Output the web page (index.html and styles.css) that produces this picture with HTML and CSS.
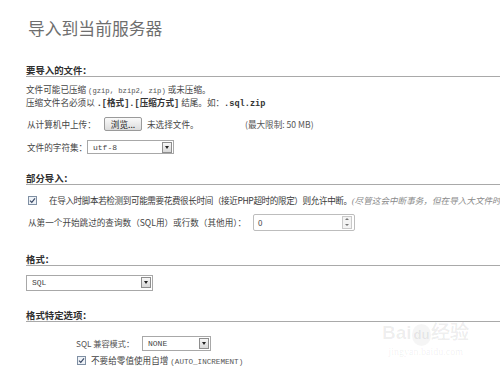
FILE: index.html
```html
<!DOCTYPE html>
<html lang="zh-CN">
<head>
<meta charset="utf-8">
<title>导入到当前服务器</title>
<link rel="stylesheet" href="styles.css">
</head>
<body>
<div class="page">
  <h1 class="title">导入到当前服务器</h1>

  <div class="sec-head h1st">要导入的文件：</div>
  <p class="desc">文件可能已压缩 <span class="latin">(gzip, bzip2, zip)</span> 或未压缩。<br>压缩文件名必须以 <b class="mono">.[格式].[压缩方式]</b> 结尾。如：<b class="mono">.sql.zip</b></p>
  <div class="row upload">
    <span class="lbl-upload">从计算机中上传：</span>
    <span class="btn">浏览...</span>
    <span class="nofile">未选择文件。</span>
    <span class="limit">(最大限制: 50 MB)</span>
  </div>
  <div class="row charset">
    <span class="lbl-charset">文件的字符集：</span>
    <span class="select sel-charset"><span class="val">utf-8</span><span class="arrow"></span></span>
  </div>

  <div class="sec-head h2nd">部分导入：</div>
  <div class="row check-row">
    <span class="cb"><svg width="9" height="9" viewBox="0 0 9 9"><rect x="0.5" y="0.5" width="8" height="8" fill="#eef2f7" stroke="#7f8fa3"/><path d="M2 4.6 L3.8 6.4 L7 2.4" fill="none" stroke="#3b4a66" stroke-width="1.2"/></svg></span>
    <span class="cb-text"><span class="tight">在导入时脚本若检测到可能需要花费很长时间（接近PHP超时的限定）则允许中断。</span><i class="note">(尽管这会中断事务，但在导入大文件时是个很好的方法。)</i></span>
  </div>
  <div class="row skip">
    <span class="lbl-skip">从第一个开始跳过的查询数（SQL用）或行数（其他用）：</span>
    <span class="num"><span class="val">0</span><span class="spin"><span class="up"></span><span class="down"></span></span></span>
  </div>

  <div class="sec-head h3rd">格式：</div>
  <div class="row fmt">
    <span class="select sel-format"><span class="val">SQL</span><span class="arrow"></span></span>
  </div>

  <div class="sec-head h4th">格式特定选项：</div>
  <div class="row compat">
    <span class="lbl-compat">SQL 兼容模式：</span>
    <span class="select sel-compat"><span class="val">NONE</span><span class="arrow"></span></span>
  </div>
  <div class="row check-row2">
    <span class="cb"><svg width="9" height="9" viewBox="0 0 9 9"><rect x="0.5" y="0.5" width="8" height="8" fill="#eef2f7" stroke="#7f8fa3"/><path d="M2 4.6 L3.8 6.4 L7 2.4" fill="none" stroke="#3b4a66" stroke-width="1.2"/></svg></span>
    <span class="cb-text2">不要给零值使用自增 <span class="small-mono">(AUTO_INCREMENT)</span></span>
  </div>
</div>
<div class="watermark">
  <div class="wm-logo">Bai<span class="wm-du">du</span>经验</div>
  <div class="wm-url">jingyan.baidu.com</div>
</div>
</body>
</html>
```
FILE: styles.css
```css
html, body {
  margin: 0;
  padding: 0;
  background: #fff;
}
body {
  width: 500px;
  height: 375px;
  overflow: hidden;
  position: relative;
  font-family: "Noto Sans CJK SC", "Liberation Sans", sans-serif;
  font-size: 8.6px;
  color: #454545;
  white-space: nowrap;
}
.page {
  padding-left: 26px;
}
.title {
  margin: 18px 0 0 2px;
  font-size: 16.8px;
  line-height: 20px;
  font-weight: normal;
  color: #6e6e6e;
}
.sec-head {
  font-size: 9.4px;
  font-weight: bold;
  color: #2f2f2f;
  line-height: 11px;
  height: 11px;
  border-bottom: 1px solid #a9a9a9;
}
.h1st { margin-top: 27px; }
.h2nd { margin-top: 19px; }
.h3rd { margin-top: 23px; }
.h4th { margin-top: 19px; }

.desc {
  margin: 7px 0 0 0;
  line-height: 11px;
}
.latin {
  font-family: "Liberation Mono", monospace;
  font-size: 7.2px;
  color: #555;
}
.mono {
  font-family: "Liberation Mono", "Noto Sans CJK SC", monospace;
  font-weight: bold;
  color: #333;
}
.row {
  display: flex;
  align-items: center;
}
.upload { margin-top: 7px; height: 14px; }
.lbl-upload { width: 77px; padding-left: 1px; }
.btn {
  box-sizing: border-box;
  width: 38px;
  height: 14px;
  border: 1px solid #9a9a9a;
  border-radius: 2px;
  background: linear-gradient(#fafafa, #dcdcdc);
  color: #222;
  font-size: 8.6px;
  line-height: 12px;
  text-align: center;
}
.nofile { width: 98px; margin-left: 5px; }
.limit { color: #555; }

.charset { margin-top: 9px; height: 14px; }
.lbl-charset { width: 60px; padding-left: 1px; }

.select {
  box-sizing: border-box;
  display: flex;
  align-items: center;
  justify-content: space-between;
  border: 1px solid #a8a8a8;
  background: #fff;
  padding: 0 1px 0 5px;
  font-family: "Liberation Mono", "DejaVu Sans Mono", monospace;
  font-size: 8px;
  color: #444;
}
.arrow {
  box-sizing: border-box;
  width: 10px;
  height: 11px;
  border: 1px solid #8e8e8e;
  background: linear-gradient(#f7f7f7, #d8d8d8);
  position: relative;
}
.arrow::after {
  content: "";
  position: absolute;
  left: 2px;
  top: 3px;
  border-left: 2px solid transparent;
  border-right: 2px solid transparent;
  border-top: 3px solid #222;
}
.sel-charset { width: 87px; height: 14px; }
.sel-format { width: 127px; height: 16px; }
.sel-compat { width: 69px; height: 15px; }

.check-row { margin-top: 9.5px; height: 11px; padding-left: 2px; }
.cb { display: flex; width: 9px; height: 9px; }
.cb-text { margin-left: 12px; color: #3a3a3a; }
.tight { letter-spacing: -0.4px; }
.note {
  color: #8a8a8a;
  font-family: "Liberation Serif", "Noto Sans CJK SC", serif;
  font-style: italic;
}
.skip { margin-top: 8px; height: 17px; }
.lbl-skip { width: 225px; padding-left: 2px; }
.num {
  box-sizing: border-box;
  width: 102px;
  height: 17px;
  border: 1px solid #bdbdbd;
  border-radius: 2px;
  display: flex;
  align-items: center;
  justify-content: space-between;
  padding: 0 2px 0 4px;
  font-size: 8px;
  color: #444;
}
.spin {
  box-sizing: border-box;
  width: 10px;
  height: 13px;
  border: 1px solid #c9c9c9;
  background: #f3f3f3;
  display: flex;
  flex-direction: column;
  align-items: center;
  justify-content: space-around;
}
.up {
  border-left: 2px solid transparent;
  border-right: 2px solid transparent;
  border-bottom: 2px solid #777;
}
.down {
  border-left: 2px solid transparent;
  border-right: 2px solid transparent;
  border-top: 2px solid #777;
}

.fmt { margin-top: 9px; }

.compat { margin-top: 14px; padding-left: 50px; }
.lbl-compat { width: 66px; font-size: 8.2px; color: #555; }
.check-row2 { margin-top: 4px; height: 11px; padding-left: 51px; }
.cb-text2 { margin-left: 5px; color: #444; }
.small-mono {
  font-family: "Liberation Mono", monospace;
  font-size: 7.6px;
  color: #555;
}

.watermark {
  position: absolute;
  left: 382px;
  top: 322px;
  color: rgba(0, 0, 0, 0.07);
  text-align: center;
}
.wm-logo {
  font-family: "Liberation Sans", sans-serif;
  font-weight: bold;
  font-size: 19px;
  line-height: 22px;
}
.wm-du {
  display: inline-block;
  background: rgba(0, 0, 0, 0.04);
  border-radius: 50%;
  padding: 0 2px;
  font-size: 13px;
}
.wm-url {
  font-family: "Liberation Serif", serif;
  font-size: 10px;
  line-height: 12px;
}
```
